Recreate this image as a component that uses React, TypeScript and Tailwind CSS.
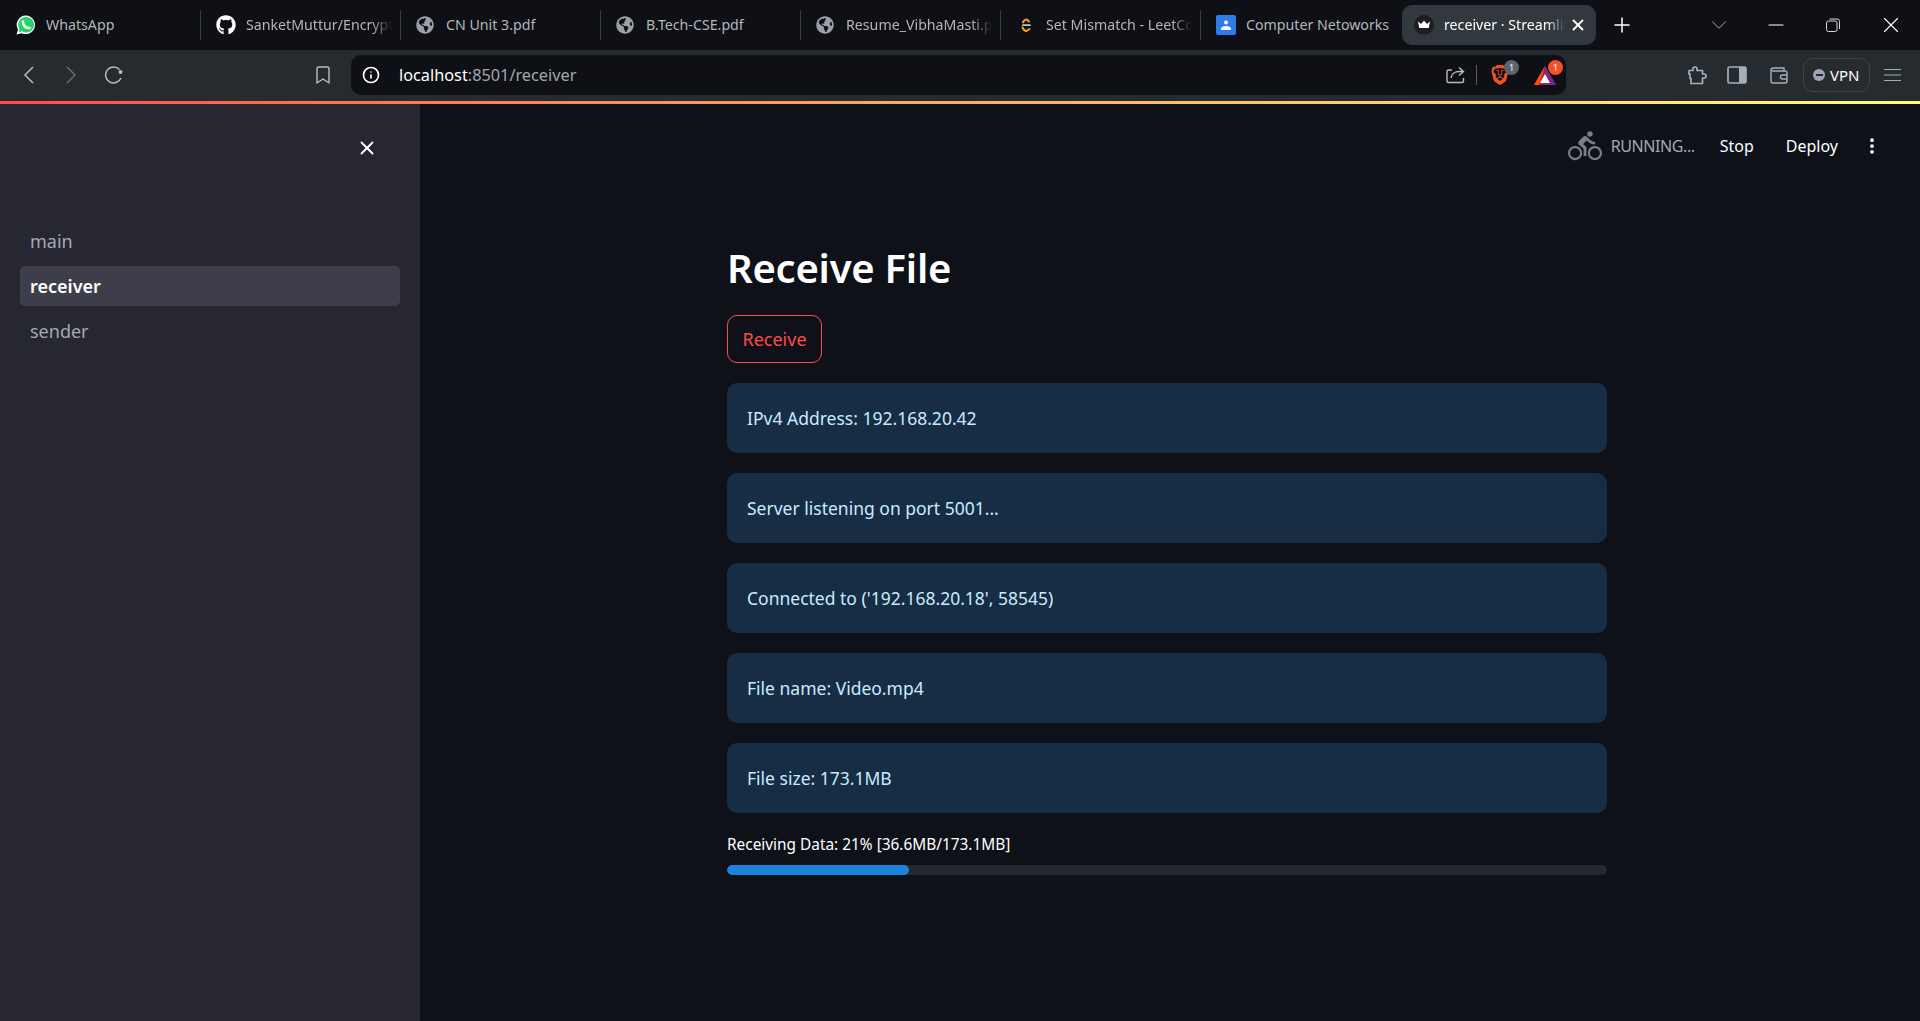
import { ChevronDown, Info, Minus, MoreVertical, Plus, X } from "lucide-react";
import { FaGithub, FaGlobeAmericas } from "react-icons/fa";
import { MdDirectionsBike } from "react-icons/md";
import { SiBrave } from "react-icons/si";
import type { ReactNode } from "react";

const globe = <FaGlobeAmericas className="h-[18px] w-[18px] text-[#9aa0a6]" />;

const TABS: { title: string; icon: ReactNode; fade?: boolean }[] = [
  { title: "WhatsApp", icon: <WhatsIcon /> },
  { title: "SanketMuttur/Encryption", icon: <FaGithub className="h-5 w-5 text-white" />, fade: true },
  { title: "CN Unit 3.pdf", icon: globe },
  { title: "B.Tech-CSE.pdf", icon: globe },
  { title: "Resume_VibhaMasti.pdf", icon: globe, fade: true },
  { title: "Set Mismatch - LeetCode", icon: <LeetIcon />, fade: true },
  { title: "Computer Netoworks", icon: <ClassroomIcon /> },
];

const ALERTS = [
  "IPv4 Address: 192.168.20.42",
  "Server listening on port 5001...",
  "Connected to ('192.168.20.18', 58545)",
  "File name: Video.mp4",
  "File size: 173.1MB",
];

function WhatsIcon() {
  return (
    <svg viewBox="0 0 20 20" className="h-5 w-5">
      <path d="M10 .5a9.300 9.300 0 0 0-8 14L.5 19.500l5.200-1.300A9.300 9.300 0 1 0 10 .5z" fill="#fff" />
      <path d="M10 2a7.800 7.800 0 0 0-6.500 12l-.9 3.200 3.300-.9A7.800 7.800 0 1 0 10 2z" fill="#25d366" />
      <path d="M7 6.500c-.6 3.500 2.800 7 6.500 6.500" fill="none" stroke="#fff" strokeWidth="2.600" strokeLinecap="round" />
    </svg>
  );
}

function LeetIcon() {
  return (
    <svg viewBox="0 0 20 20" className="h-5 w-5" fill="none" strokeLinecap="round">
      <path d="M7 7.500Q8 4.500 11 4.500L13 6.500" stroke="#f0a020" strokeWidth="2" />
      <path d="M6.500 12.500Q8 16 10.500 16L13.500 14" stroke="#f0a020" strokeWidth="2" />
      <path d="M7 10.200h7" stroke="#c4c7cc" strokeWidth="1.800" />
    </svg>
  );
}

function ClassroomIcon() {
  return (
    <svg viewBox="0 0 20 20" className="h-5 w-5">
      <rect width="20" height="20" rx="2" fill="#2f7be8" />
      <circle cx="10" cy="7.500" r="2" fill="#fff" />
      <path d="M5 15v-1.500C5 12 7.500 11 10 11s5 1 5 2.500V15z" fill="#fff" />
    </svg>
  );
}

function Tab({ title, icon, fade, last }: { title: string; icon: ReactNode; fade?: boolean; last: boolean }) {
  return (
    <div className="flex h-[50px] w-[200px] shrink-0 items-center">
      <div
        className={`flex h-[30px] w-full items-center pl-[15px] pr-[8px] ${last ? "" : "border-r border-[#3a3d42]"}`}
      >
        <span className="flex w-[30px] shrink-0 items-center">{icon}</span>
        <span
          className={`min-w-0 flex-1 overflow-hidden whitespace-nowrap text-[14.2px] text-[#b4b6ba] ${fade ? "[mask-image:linear-gradient(90deg,#000_86%,transparent)]" : ""}`}
        >
          {title}
        </span>
      </div>
    </div>
  );
}

function TabStrip() {
  return (
    <div className="flex h-[50px] shrink-0 items-center bg-[#0e1015] pl-px">
      {TABS.map((t, i) => (
        <Tab key={t.title} title={t.title} icon={t.icon} fade={t.fade} last={i === TABS.length - 1} />
      ))}
      <div className="ml-px flex h-10 w-[194px] shrink-0 items-center rounded-[10px] bg-[#32393e] pl-3 pr-2">
        <span className="mr-[10px] flex h-5 w-5 shrink-0 items-center justify-center rounded-full bg-[#1c1e24]">
          <svg viewBox="0 0 14 10" className="h-[10px] w-[14px]" fill="#fff">
            <path d="M1 1.500 4 4l3-3.500L10 4l3-2.500-1.200 6.500H2.200z" />
          </svg>
        </span>
        <span className="min-w-0 flex-1 overflow-hidden whitespace-nowrap text-[14.2px] text-white [mask-image:linear-gradient(90deg,#000_85%,transparent)]">
          receiver · Streamlit
        </span>
        <X className="ml-1 mr-px h-[18px] w-[18px] shrink-0 text-white" strokeWidth={2.5} />
      </div>
      <Plus className="ml-[14px] h-6 w-6 shrink-0 text-white" strokeWidth={1.5} />
      <ChevronDown className="ml-[72px] h-[26px] w-[26px] shrink-0 text-[#a9acb0]" strokeWidth={0.9} />
      <Minus className="ml-[32px] h-6 w-6 shrink-0 text-white" strokeWidth={1.1} />
      <svg viewBox="0 0 14 14" className="ml-[38px] h-[14px] w-[14px] shrink-0" fill="none" stroke="#d5d7da" strokeWidth="1">
        <rect x="0.5" y="3" width="10.500" height="10.500" rx="2" />
        <path d="M3.500 1h7.500a2.500 2.500 0 0 1 2.500 2.500V11" />
      </svg>
      <X className="ml-[38px] h-[26px] w-[26px] shrink-0 text-white" strokeWidth={1} />
    </div>
  );
}

function AddressBar() {
  return (
    <div className="flex h-10 w-[1215px] shrink-0 items-center rounded-[10px] bg-[#0e1015] pl-[11px] pr-[10px]">
      <Info className="h-[18px] w-[18px] shrink-0 text-white" strokeWidth={2.2} />
      <span className="ml-[19px] text-[16.3px] text-white">
        localhost<span className="text-[#a3a7ac]">:8501/receiver</span>
      </span>
      <svg viewBox="0 0 20 20" className="ml-auto h-5 w-5 shrink-0" fill="none" stroke="#b9bdc1" strokeWidth="1.400">
        <path d="M7 5H3.500A1.500 1.500 0 0 0 2 6.500V16a1.500 1.500 0 0 0 1.500 1.500H17a1.500 1.500 0 0 0 1.500-1.500v-3" />
        <path d="M6 13c.5-4 4-6.500 8-6.500H18M14 2.500 18.500 6.500 14 10.500" />
      </svg>
      <span className="ml-[11px] h-5 w-px bg-[#5a5e63]" />
      <span className="relative ml-[13px] flex h-5 w-5 items-center justify-center">
        <SiBrave className="h-[22px] w-[20px] text-[#f1501f]" />
        <span className="absolute -right-[9px] -top-[5px] flex h-[15px] w-[15px] items-center justify-center rounded-full bg-[#5f6270] text-[9px] text-white">
          1
        </span>
      </span>
      <span className="relative ml-[24px] flex h-5 w-[22px] items-center justify-center">
        <svg viewBox="0 0 22 20" className="h-5 w-[22px]">
          <path d="M11 1 22 20H0z" fill="#9e1f63" />
          <path d="M11 1 22 20H17z" fill="#662d91" />
          <path d="M11 1 0 20h5z" fill="#ff5000" />
          <path d="M11 9l5 9H6z" fill="#fff" />
        </svg>
        <span className="absolute -right-[7px] -top-[5px] flex h-[15px] w-[15px] items-center justify-center rounded-full bg-[#f4502a] text-[9px] text-white">
          1
        </span>
      </span>
    </div>
  );
}

function Toolbar() {
  return (
    <div className="flex h-[51px] shrink-0 items-center bg-[#262b30] pb-px">
      <svg viewBox="0 0 11 18" className="ml-[23px] h-[18px] w-[11px] shrink-0" fill="none" stroke="#b9bdc1" strokeWidth="1.500">
        <path d="M10 1 2 9l8 8" />
      </svg>
      <svg viewBox="0 0 11 18" className="ml-[32px] h-[18px] w-[11px] shrink-0" fill="none" stroke="#666b70" strokeWidth="1.500">
        <path d="M1 1l8 8-8 8" />
      </svg>
      <svg viewBox="0 0 19 18" className="ml-[27px] h-[18px] w-[19px] shrink-0" fill="none" stroke="#b9bdc1" strokeWidth="1.500">
        <path d="M15.500 3.500A8 8 0 1 0 17 12" />
        <circle cx="16.500" cy="6" r="2" fill="#b9bdc1" stroke="none" />
      </svg>
      <svg viewBox="0 0 14 18" className="ml-[193px] mr-[21px] h-[18px] w-[14px] shrink-0" fill="none" stroke="#b9bdc1" strokeWidth="1.400">
        <path d="M1 2.500A1.500 1.500 0 0 1 2.500 1h9A1.500 1.500 0 0 1 13 2.500V17l-6-4-6 4z" strokeLinejoin="round" />
      </svg>
      <AddressBar />
      <svg viewBox="0 0 20 20" className="ml-[121px] h-5 w-5 shrink-0" fill="none" stroke="#a3b0b8" strokeWidth="1.700">
        <path d="M2 5.500h4V4a2 2 0 0 1 4 0v1.500h5.500V9H17a2 2 0 0 1 0 4h-1.500v5.500H4v-5H3V9H2z" strokeLinejoin="round" />
      </svg>
      <svg viewBox="0 0 20 18" className="ml-[20px] h-[18px] w-5 shrink-0">
        <rect x="1" y="1" width="18" height="16" rx="1.500" fill="none" stroke="#a3b0b8" strokeWidth="1.700" />
        <rect x="12" y="1" width="7" height="16" fill="#a3b0b8" />
      </svg>
      <svg viewBox="0 0 20 18" className="ml-[22px] h-[18px] w-5 shrink-0" fill="none" stroke="#a3b0b8" strokeWidth="1.400">
        <path d="M2 4.500A2.500 2.500 0 0 1 4.500 2H15v3M2 4.500V15a2 2 0 0 0 2 2h12a2 2 0 0 0 2-2V7a2 2 0 0 0-2-2H3" />
        <path d="M18 9h-4.500a2 2 0 0 0 0 4H18" />
      </svg>
      <div className="ml-[14px] flex h-[34px] w-[67px] shrink-0 items-center rounded-[10px] border border-[#3e454b] pl-[9px]">
        <span className="flex h-3 w-3 items-center justify-center rounded-full bg-[#9fa3b5]">
          <span className="h-[2px] w-[7px] bg-[#262b30]" />
        </span>
        <span className="ml-[5px] text-[15px] text-white">VPN</span>
      </div>
      <svg viewBox="0 0 17 14" className="ml-[14px] h-[14px] w-[17px] shrink-0" fill="none" stroke="#a3b0b8" strokeWidth="1.200">
        <path d="M0 1.500h17M0 7h17M0 12.500h17" />
      </svg>
    </div>
  );
}

function Sidebar() {
  return (
    <aside className="flex w-[420px] shrink-0 flex-col bg-[#262730] px-5">
      <div className="flex h-[55px] items-end justify-end pr-[22px]">
        <X className="h-[22px] w-[22px] text-white" strokeWidth={2} />
      </div>
      <nav className="mt-[62px] flex flex-col gap-[5px]">
        <a className="flex h-10 items-center rounded-[5px] px-[10px] text-[18px] text-[#a3a8b4]">main</a>
        <a className="flex h-10 items-center rounded-[5px] bg-[#3d3e4a] px-[10px] text-[18px] font-semibold text-white">
          receiver
        </a>
        <a className="flex h-10 items-center rounded-[5px] px-[10px] text-[18px] text-[#a3a8b4]">sender</a>
      </nav>
    </aside>
  );
}

function Main() {
  return (
    <main className="flex min-w-0 flex-1 flex-col bg-[#0e1117]">
      <header className="flex h-[84px] items-center justify-end pr-[38px] text-white">
        <MdDirectionsBike className="h-[34px] w-[34px] text-[#7a7d85]" />
        <span className="ml-[9px] text-[16px] tracking-tight text-[#a3a8b4]">RUNNING...</span>
        <span className="ml-[25px] text-[16px]">Stop</span>
        <span className="ml-[32px] text-[16px]">Deploy</span>
        <MoreVertical className="ml-[24px] h-5 w-5" strokeWidth={2.5} />
      </header>
      <section className="ml-[307px] flex w-[880px] flex-col pt-[52px]">
        <h1 className="h-[56px] text-[40px] font-semibold leading-[56px] tracking-[-0.25px] text-white">Receive File</h1>
        <button className="mt-[19px] h-12 w-[95px] rounded-[10px] border border-[#ff4b4b] text-[18px] text-[#ff4b4b]">
          Receive
        </button>
        <div className="mt-5 flex flex-col gap-5">
          {ALERTS.map((msg) => (
            <div key={msg} className="flex h-[70px] items-center rounded-[10px] bg-[#172d43] px-5 text-[17.5px] text-[#c7ebff]">
              {msg}
            </div>
          ))}
        </div>
        <div className="mt-5 text-[15.4px] leading-6 text-white">Receiving Data: 21% [36.6MB/173.1MB]</div>
        <div className="mt-2 h-[10px] w-full overflow-hidden rounded-full bg-[#262730]">
          <div className="h-full w-[182px] rounded-full bg-[#1c83e1]" />
        </div>
      </section>
    </main>
  );
}

export default function App() {
  return (
    <div className="flex h-screen flex-col overflow-hidden font-['Noto_Sans',sans-serif]">
      <TabStrip />
      <Toolbar />
      <div className="h-[3px] shrink-0 bg-gradient-to-r from-[#ff4b4b] to-[#fffd80]" />
      <div className="flex min-h-0 flex-1">
        <Sidebar />
        <Main />
      </div>
    </div>
  );
}
